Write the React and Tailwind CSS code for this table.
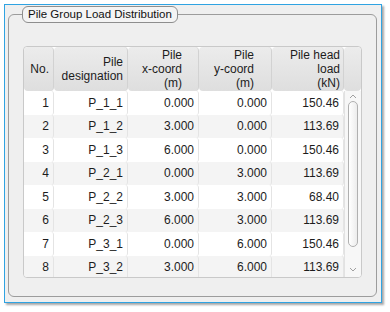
import React from "react";

// pile data as shown in the results table
const ROWS = [
    [1, "P_1_1", "0.000", "0.000", "150.46"],
    [2, "P_1_2", "3.000", "0.000", "113.69"],
    [3, "P_1_3", "6.000", "0.000", "150.46"],
    [4, "P_2_1", "0.000", "3.000", "113.69"],
    [5, "P_2_2", "3.000", "3.000", "68.40"],
    [6, "P_2_3", "6.000", "3.000", "113.69"],
    [7, "P_3_1", "0.000", "6.000", "150.46"],
    [8, "P_3_2", "3.000", "6.000", "113.69"],
];

const headCell =
    "flex flex-col justify-center text-right leading-[14px] rounded-[4px] border-r border-[#d2d2d2] bg-gradient-to-b from-[#ececec] to-[#dedede]";
const cell = "flex items-center justify-end pr-[4px] border-r border-[#e4e4e4] rounded-[3px]";

const App = () => {
    return (
        <div className="w-[390px] h-[312px] bg-white pl-[4px] pt-[4px] text-[12px] text-[#1c1c1c] font-['Liberation_Sans',Arial,sans-serif]">
            {/* Window frame */}
            <div className="w-[378px] h-[299px] border border-[#2fa3e2] bg-[#efefef] shadow-[2px_2px_2px_rgba(0,0,0,0.35)] pl-[3px] pr-[4px] pt-[9px] pb-[5px]">
                {/* Group box */}
                <div className="relative h-full border border-[#9c9c9c] rounded-[6px] pl-[14px] pr-[14px] pt-[31px] pb-[18px]">
                    <div className="absolute left-[13px] top-[-9px] h-[17px] px-[5px] flex items-center bg-[#f4f4f4] border border-[#8e8e8e] rounded-[6px] text-[11.5px] text-[#111]">
                        Pile Group Load Distribution
                    </div>

                    {/* Table */}
                    <div className="h-full border border-[#c9c9c9] rounded-[4px] bg-white overflow-hidden flex flex-col">
                        <div className="flex h-[44px] shrink-0">
                            <div className={`${headCell} w-[30px] pr-[4px]`}>No.</div>
                            <div className={`${headCell} w-[74px] pr-[4px]`}>
                                <span>Pile</span>
                                <span>designation</span>
                            </div>
                            <div className={`${headCell} w-[71px] pr-[16px]`}>
                                <span>Pile</span>
                                <span>x-coord</span>
                                <span>(m)</span>
                            </div>
                            <div className={`${headCell} w-[73px] pr-[17px]`}>
                                <span>Pile</span>
                                <span>y-coord</span>
                                <span>(m)</span>
                            </div>
                            <div className={`${headCell} w-[72px] pr-[3px]`}>
                                <span>Pile head</span>
                                <span>load</span>
                                <span>(kN)</span>
                            </div>
                            <div className={`${headCell} flex-1 border-r-0`}></div>
                        </div>

                        <div className="flex flex-1 min-h-0">
                            <div className="w-[320px] flex flex-col">
                                {ROWS.map((r, i) => (
                                    <div
                                        key={r[0]}
                                        className={`flex h-[23.5px] shrink-0 ${i % 2 === 1 ? "bg-[#f4f4f4]" : "bg-white"}`}
                                    >
                                        <div className={`${cell} w-[30px]`}>{r[0]}</div>
                                        <div className={`${cell} w-[74px]`}>{r[1]}</div>
                                        <div className={`${cell} w-[71px]`}>{r[2]}</div>
                                        <div className={`${cell} w-[73px]`}>{r[3]}</div>
                                        <div className={`${cell} w-[72px]`}>{r[4]}</div>
                                    </div>
                                ))}
                            </div>

                            {/* Scrollbar */}
                            <div className="flex-1 flex flex-col items-center bg-[#f7f7f7] border-l border-[#e2e2e2] py-[2px]">
                                <svg width="8" height="6" viewBox="0 0 8 6" className="shrink-0">
                                    <path d="M1 5 L4 2 L7 5" fill="none" stroke="#a0a0a0" strokeWidth="1" />
                                </svg>
                                <div className="w-[10px] h-[146px] mt-[2px] rounded-[5px] border border-[#b0b0b0] bg-gradient-to-r from-[#ffffff] to-[#ececec]"></div>
                                <div className="flex-1"></div>
                                <svg width="8" height="6" viewBox="0 0 8 6" className="shrink-0 mb-[2px]">
                                    <path d="M1 1 L4 4 L7 1" fill="none" stroke="#a0a0a0" strokeWidth="1" />
                                </svg>
                            </div>
                        </div>
                    </div>
                </div>
            </div>
        </div>
    );
};

export default App;
